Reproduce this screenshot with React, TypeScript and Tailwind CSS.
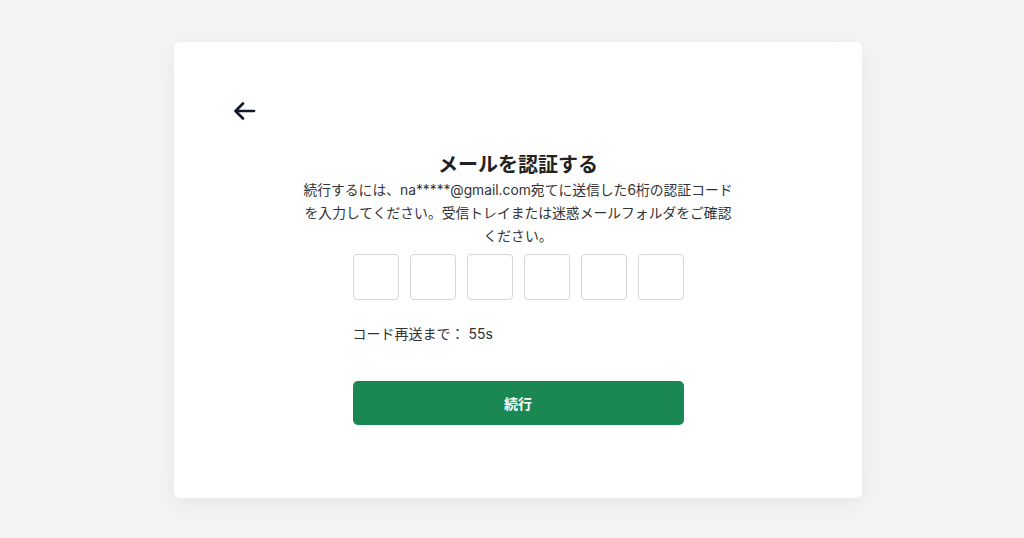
import React from 'react';

const App: React.FC = () => {
  const boxes = [0, 1, 2, 3, 4, 5];
  return (
    <div
      className="min-h-screen bg-[#f4f4f4] pt-[42px] pl-[174px]"
      style={{ fontFamily: 'Inter, "Noto Sans CJK JP", sans-serif' }}
    >
      <div className="w-[688px] h-[456px] bg-white rounded-md shadow-[0_6px_24px_rgba(0,0,0,0.06)] px-[59px] pt-[59px]">
        <button className="block w-[24px] h-[20px] text-[#111827]">
          <svg viewBox="0 0 24 20" className="w-[24px] h-[20px]" fill="none" stroke="currentColor" strokeWidth="2.6" strokeLinecap="round" strokeLinejoin="round">
            <path d="M21 10H3" />
            <path d="M10 2.5L2.5 10L10 17.5" />
          </svg>
        </button>

        <div className="flex flex-col items-center mt-[30px]">
          <h1 className="text-[20px] leading-[28px] font-bold text-[#222]">メールを認証する</h1>
          <p className="w-[436px] text-center text-[13.8px] leading-[23px] text-[#333]">
            続行するには、na*****@gmail.com宛てに送信した6桁の認証コードを入力してください。受信トレイまたは迷惑メールフォルダをご確認ください。
          </p>

          <div className="w-[331px] mt-[6px] flex justify-between">
            {boxes.map(i => (
              <input
                key={i}
                maxLength={1}
                className="w-[46px] h-[46px] rounded-[4px] border border-[#d6d6d6] bg-white text-center text-lg outline-none"
              />
            ))}
          </div>

          <p className="w-[331px] mt-[24px] text-[14px] leading-[20px] text-[#333]">コード再送まで： 55s</p>

          <button className="w-[331px] h-[44px] mt-[37px] rounded-[5px] bg-[#1b8753] text-white text-[14px] font-bold">
            続行
          </button>
        </div>
      </div>
    </div>
  );
};

export default App;
